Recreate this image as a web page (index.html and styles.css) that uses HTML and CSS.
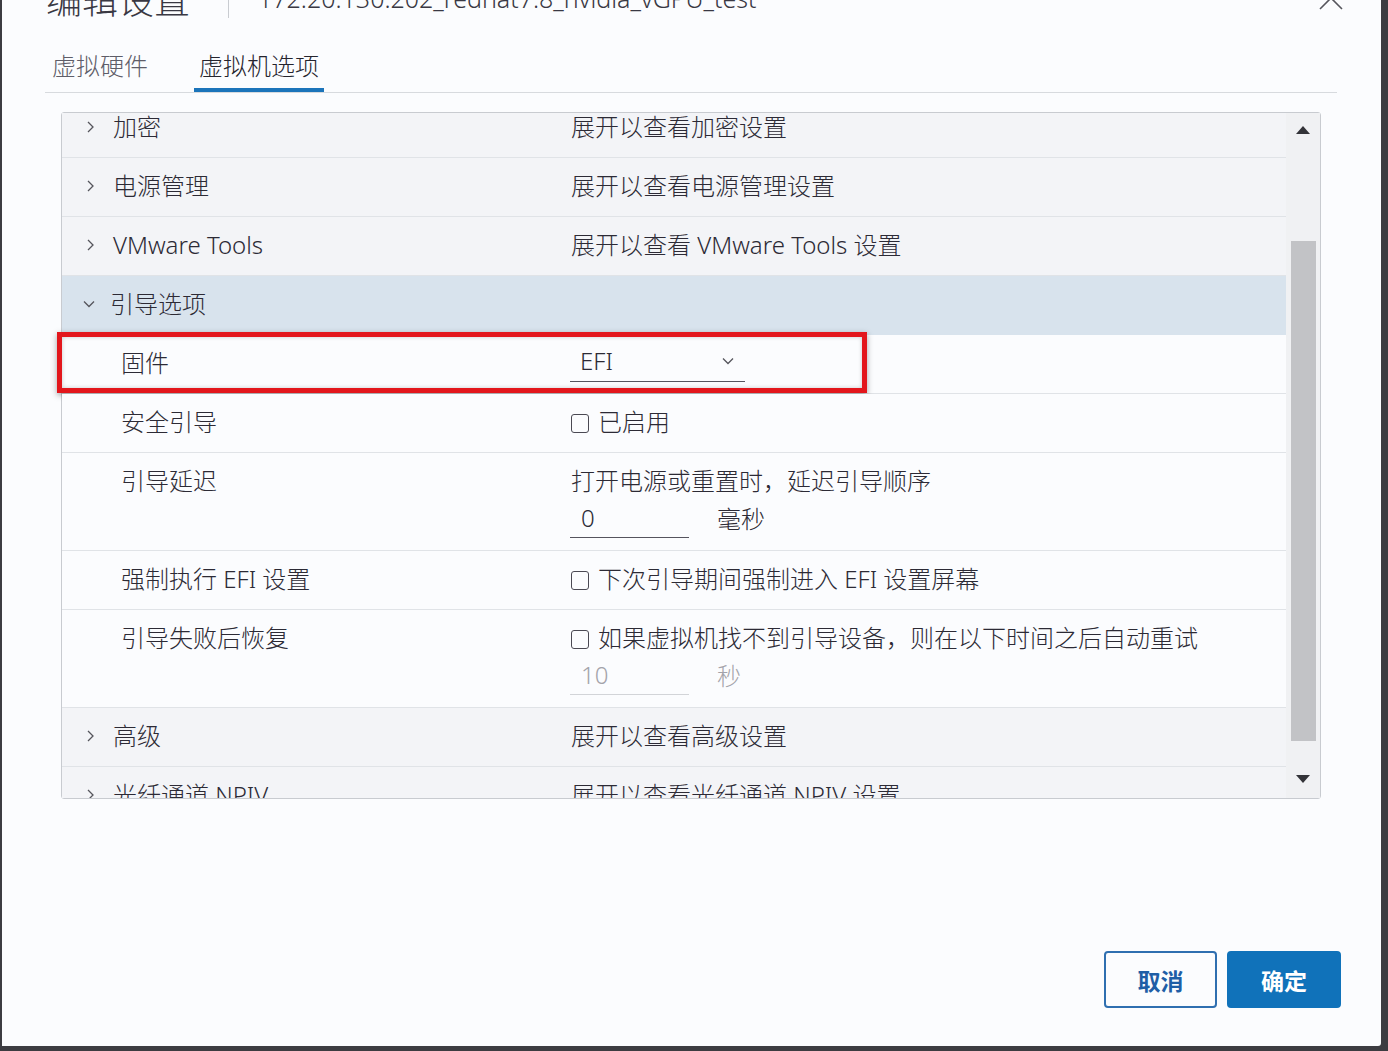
FILE: index.html
```html
<!DOCTYPE html>
<html lang="zh-CN">
<head>
    <meta charset="UTF-8">
    <title>编辑设置</title>
    <link rel="stylesheet" href="styles.css">
</head>
<body>
    <div class="dialog">
        <div class="dialog-header">
            <span class="title">编辑设置</span>
            <span class="sep"></span>
            <span class="subtitle">172.20.130.202_redhat7.8_nvidia_vGPU_test</span>
            <svg class="close" width="26" height="26" viewBox="0 0 26 26"><path d="M2 2 L24 24 M24 2 L2 24" stroke="#55555c" stroke-width="1.6" fill="none"/></svg>
        </div>

        <div class="tabs">
            <div class="tab">虚拟硬件</div>
            <div class="tab active">虚拟机选项</div>
        </div>

        <div class="stack">
            <div class="stack-body">
                <div class="row group first">
                    <div class="label"><svg class="chev" width="8" height="12" viewBox="0 0 8 12"><polyline points="2,1 7,6 2,11" fill="none" stroke="#55555c" stroke-width="1.3"/></svg>加密</div>
                    <div class="value">展开以查看加密设置</div>
                </div>
                <div class="row group">
                    <div class="label"><svg class="chev" width="8" height="12" viewBox="0 0 8 12"><polyline points="2,1 7,6 2,11" fill="none" stroke="#55555c" stroke-width="1.3"/></svg>电源管理</div>
                    <div class="value">展开以查看电源管理设置</div>
                </div>
                <div class="row group">
                    <div class="label"><svg class="chev" width="8" height="12" viewBox="0 0 8 12"><polyline points="2,1 7,6 2,11" fill="none" stroke="#55555c" stroke-width="1.3"/></svg>VMware Tools</div>
                    <div class="value">展开以查看 VMware Tools 设置</div>
                </div>
                <div class="row group open">
                    <div class="label"><svg class="chev down" width="12" height="8" viewBox="0 0 12 8"><polyline points="1,1.5 6,6.5 11,1.5" fill="none" stroke="#55555c" stroke-width="1.3"/></svg>引导选项</div>
                    <div class="value"></div>
                </div>
                <div class="row child">
                    <div class="label">固件</div>
                    <div class="value">
                        <div class="select">
                            <span>EFI</span>
                            <svg width="12" height="8" viewBox="0 0 12 8"><polyline points="1,1.5 6,6.5 11,1.5" fill="none" stroke="#55555c" stroke-width="1.3"/></svg>
                        </div>
                    </div>
                    <div class="highlight"></div>
                </div>
                <div class="row child">
                    <div class="label">安全引导</div>
                    <div class="value"><span class="check"></span>已启用</div>
                </div>
                <div class="row child">
                    <div class="label">引导延迟</div>
                    <div class="value">
                        <div>打开电源或重置时，延迟引导顺序</div>
                        <div class="field">
                            <div class="input">0</div>
                            <span class="unit">毫秒</span>
                        </div>
                    </div>
                </div>
                <div class="row child">
                    <div class="label">强制执行 EFI 设置</div>
                    <div class="value"><span class="check"></span>下次引导期间强制进入 EFI 设置屏幕</div>
                </div>
                <div class="row child">
                    <div class="label">引导失败后恢复</div>
                    <div class="value">
                        <div><span class="check"></span>如果虚拟机找不到引导设备，则在以下时间之后自动重试</div>
                        <div class="field disabled">
                            <div class="input">10</div>
                            <span class="unit">秒</span>
                        </div>
                    </div>
                </div>
                <div class="row group">
                    <div class="label"><svg class="chev" width="8" height="12" viewBox="0 0 8 12"><polyline points="2,1 7,6 2,11" fill="none" stroke="#55555c" stroke-width="1.3"/></svg>高级</div>
                    <div class="value">展开以查看高级设置</div>
                </div>
                <div class="row group">
                    <div class="label"><svg class="chev" width="8" height="12" viewBox="0 0 8 12"><polyline points="2,1 7,6 2,11" fill="none" stroke="#55555c" stroke-width="1.3"/></svg>光纤通道 NPIV</div>
                    <div class="value">展开以查看光纤通道 NPIV 设置</div>
                </div>
            </div>
            <div class="scrollbar">
                <div class="arrow up"><svg width="14" height="8" viewBox="0 0 14 8"><polygon points="0,8 7,0 14,8" fill="#333338"/></svg></div>
                <div class="track"><div class="thumb"></div></div>
                <div class="arrow down"><svg width="14" height="8" viewBox="0 0 14 8"><polygon points="0,0 14,0 7,8" fill="#333338"/></svg></div>
            </div>
        </div>

        <div class="footer">
            <button class="btn secondary">取消</button>
            <button class="btn primary">确定</button>
        </div>
    </div>
</body>
</html>
```

FILE: styles.css
```css
* {
    box-sizing: border-box;
}

body {
    margin: 0;
    background-color: #3c3c41;
    font-family: "Noto Sans", "Noto Sans CJK SC", sans-serif;
    font-weight: 300;
    color: #2c2a35;
}

.dialog {
    margin-left: 2px;
    width: 1379px;
    height: 1046px;
    background-color: #fbfcfe;
    border-bottom-right-radius: 3px;
    display: flex;
    flex-direction: column;
    overflow: hidden;
}

.dialog-header {
    display: flex;
    align-items: center;
    height: 44px;
    margin-top: -24px;
    padding: 0 37px 0 44px;
    color: #393843;
}

.title {
    font-size: 36px;
}

.sep {
    width: 1px;
    height: 40px;
    background-color: #c9ccd1;
    margin: 0 29px 0 38px;
}

.subtitle {
    font-size: 25px;
}

.close {
    margin-left: auto;
}

.tabs {
    display: flex;
    gap: 41px;
    margin: 0 44px 0 43px;
    padding: 34px 0 0 2px;
    border-bottom: 1px solid #d7dade;
}

.tab {
    font-size: 24px;
    line-height: 24px;
    padding: 0 5px 10px;
    border-bottom: 4px solid transparent;
    color: #5e5d68;
}

.tab.active {
    color: #25242d;
    border-bottom-color: #1b74ba;
}

.stack {
    margin: 19px 0 0 59px;
    width: 1260px;
    height: 687px;
    border: 1px solid #c8cbd0;
    border-radius: 3px;
    display: flex;
}

.stack-body {
    width: 1224px;
    clip-path: inset(-12px -12px 0 -12px);
}

.row {
    position: relative;
    display: grid;
    grid-template-columns: 509px 1fr;
    padding: 16px 0 18px;
    min-height: 59px;
    font-size: 24px;
    line-height: 24px;
    border-bottom: 1px solid #e0e3e7;
    background-color: #fbfcfe;
}

.row.group {
    background-color: #f3f4f7;
}

.row.open {
    background-color: #d8e3ed;
    border-bottom-color: #d8e3ed;
}

.row.first {
    min-height: 44px;
    padding-top: 2px;
}

.row .label {
    display: flex;
    align-items: center;
    align-self: start;
    padding-left: 59px;
}

.row.group .label {
    padding-left: 24px;
}

.chev {
    margin-right: 19px;
}

.chev.down {
    margin-left: -3px;
    margin-right: 15px;
}

.check {
    display: inline-block;
    width: 18px;
    height: 19px;
    border: 1.5px solid #4a4953;
    border-radius: 3px;
    margin-right: 9px;
    vertical-align: -2px;
}

.select {
    display: flex;
    align-items: center;
    justify-content: space-between;
    width: 175px;
    margin: -2px 0 -9px -1px;
    padding: 0 11px 8px 10px;
    border-bottom: 1.5px solid #55545e;
}

.field {
    display: flex;
    align-items: center;
    margin: 6px 0 -6px;
}

.input {
    width: 119px;
    height: 39px;
    margin-left: -1px;
    padding-left: 11px;
    line-height: 38px;
    border-bottom: 1.5px solid #55545e;
}

.unit {
    margin-left: 28px;
}

.field.disabled {
    color: #a3a3aa;
}

.field.disabled .input {
    border-bottom-color: #d2d4d8;
}

.highlight {
    position: absolute;
    left: -5px;
    top: -3px;
    width: 810px;
    height: 61px;
    border: 5px solid #e3161c;
    box-shadow: 0 2px 6px rgba(0, 0, 0, 0.35), inset 0 0 4px rgba(0, 0, 0, 0.2);
}

.scrollbar {
    width: 34px;
    background-color: #f0f1f3;
    display: flex;
    flex-direction: column;
    align-items: center;
}

.arrow {
    display: flex;
    align-items: center;
    justify-content: center;
    width: 100%;
    height: 34px;
}

.arrow.down {
    height: 38px;
}

.track {
    flex: 1;
    width: 25px;
}

.thumb {
    margin-top: 94px;
    height: 500px;
    background-color: #c2c3c6;
}

.footer {
    margin-top: auto;
    display: flex;
    justify-content: flex-end;
    gap: 10px;
    padding: 0 40px 38px 0;
}

.btn {
    width: 113px;
    height: 57px;
    border-radius: 4px;
    font-family: "Noto Sans", "Noto Sans CJK SC", sans-serif;
    font-size: 23px;
    font-weight: 700;
    cursor: pointer;
}

.btn.secondary {
    border: 2px solid #2f6fb0;
    color: #1f5ea6;
    background-color: #fbfcfe;
}

.btn.primary {
    width: 114px;
    border: 2px solid #1072ba;
    color: #fff;
    background-color: #1072ba;
}
```
